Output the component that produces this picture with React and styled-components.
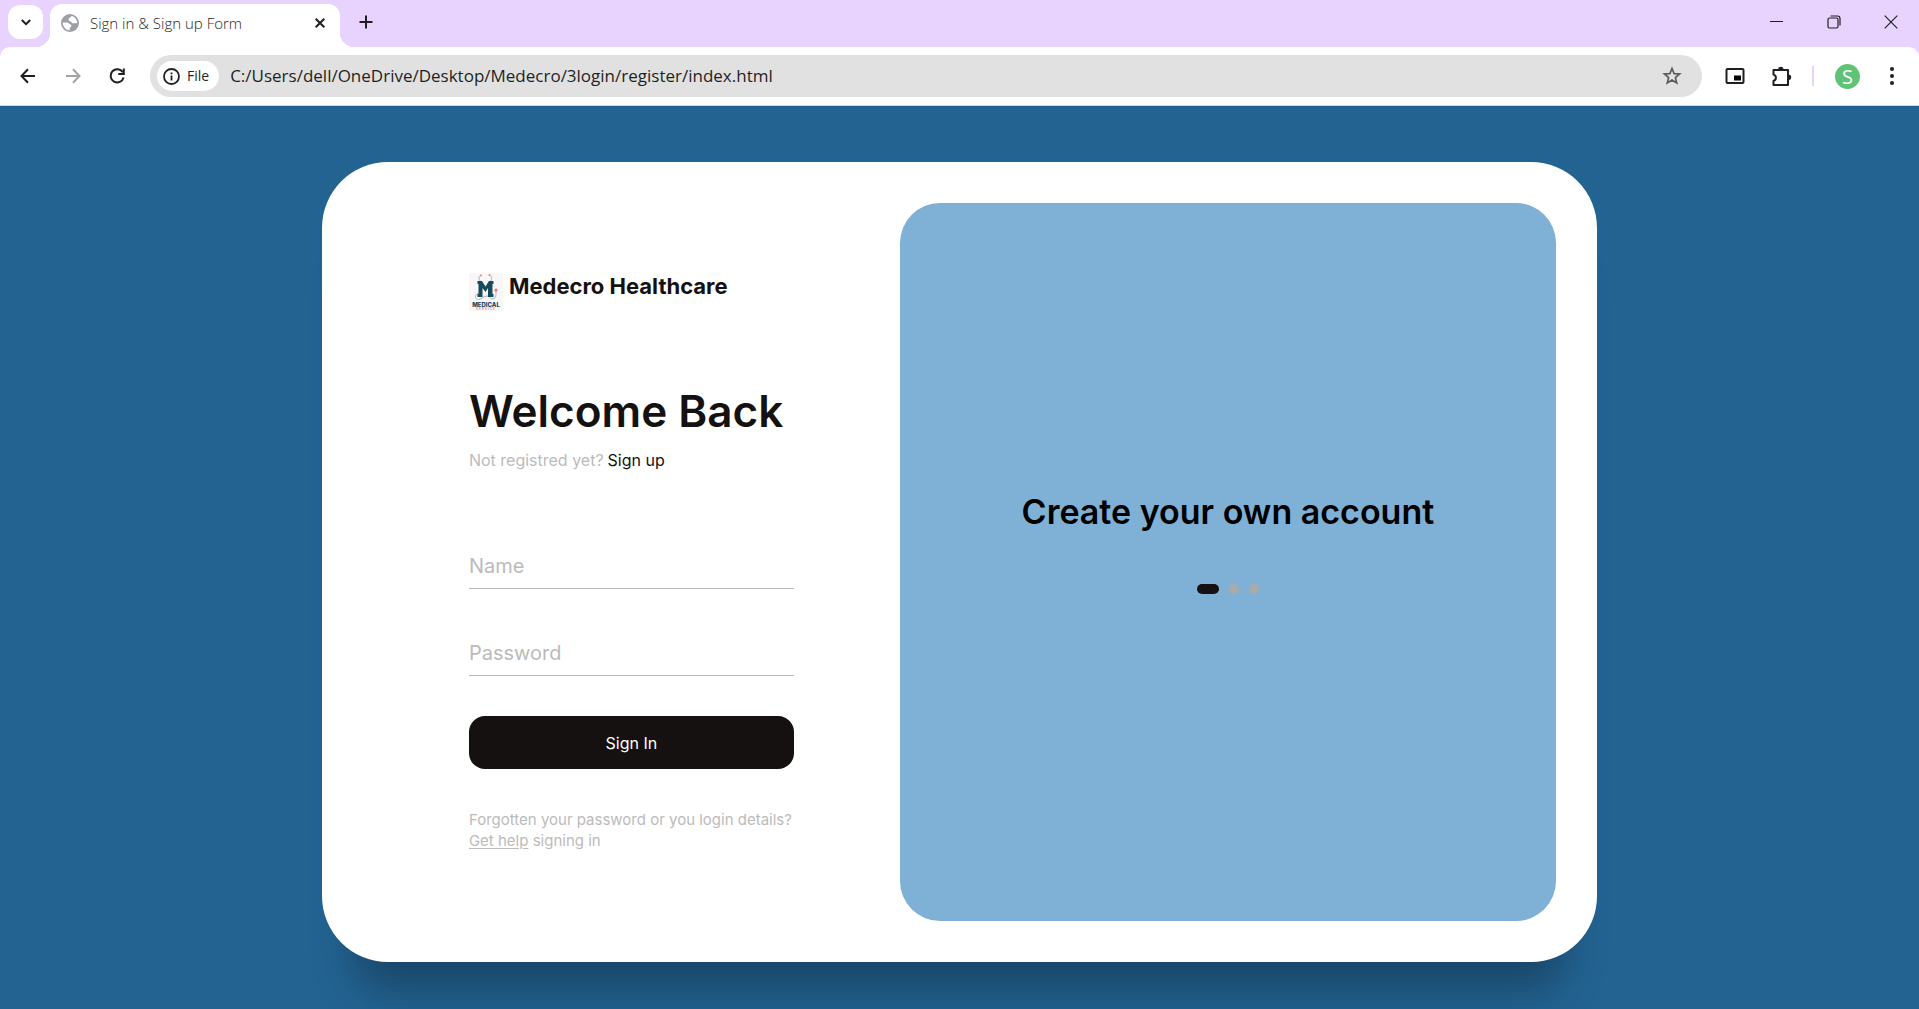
import React from "react";
import styled, { createGlobalStyle } from "styled-components";

const GlobalStyle = createGlobalStyle`
  *, *::before, *::after { box-sizing: border-box; }
  body { margin: 0; }
  body, button, input { font-family: Inter, "Liberation Sans", sans-serif; }
  button { border: 0; padding: 0; background: none; color: inherit; cursor: pointer; }
  h1, h2, p { margin: 0; }
  svg { display: block; flex: none; }
`;

const Window = styled.div`
  min-height: 100vh;
  display: flex;
  flex-direction: column;
  background: #e8d3ff;
`;

/* ---------- browser frame ---------- */

const TabStrip = styled.header`
  display: flex;
  height: 47px;
  padding-left: 8px;
  color: #1f1f23;
  font-family: "Open Sans", "Noto Sans", sans-serif;
`;

const TabSearch = styled.button`
  display: grid;
  place-items: center;
  width: 35px;
  height: 34px;
  margin: 5px 7px 0 0;
  border-radius: 12px;
  background: #fff;
`;

const Tab = styled.div`
  position: relative;
  display: flex;
  align-items: center;
  width: 290px;
  margin-top: 4px;
  padding: 0 12px 6px 11px;
  border-radius: 12px 12px 0 0;
  background: #fff;

  &::before,
  &::after {
    content: "";
    position: absolute;
    bottom: 0;
    width: 14px;
    height: 14px;
  }
  &::before {
    right: 100%;
    background: radial-gradient(circle at 0 0, transparent 14px, #fff 14px);
  }
  &::after {
    left: 100%;
    background: radial-gradient(circle at 100% 0, transparent 14px, #fff 14px);
  }
`;

const TabTitle = styled.span`
  flex: 1;
  padding-left: 11px;
  font-size: 15px;
  line-height: 20px;
  font-weight: 300;
  white-space: nowrap;
`;

const StripButton = styled.button`
  display: grid;
  place-items: center;
  width: 16px;
  height: 16px;
`;

const NewTab = styled(StripButton)`
  margin: 14px 0 0 18px;
`;

const WindowControls = styled.div`
  display: flex;
  margin-left: auto;
`;

const WindowButton = styled.button`
  display: grid;
  place-items: center;
  width: 57px;
  height: 43px;
`;

const Toolbar = styled.nav`
  display: flex;
  align-items: center;
  height: 59px;
  padding: 0 17px 0 18px;
  border-bottom: 1px solid #d5d5d8;
  border-radius: 10px 10px 0 0;
  background: #fff;
  color: #1f1f23;
`;

const NavButtons = styled.div`
  display: flex;
  gap: 25px;
  margin-right: 22px;
`;

const IconButton = styled.button`
  display: grid;
  place-items: center;
  width: 20px;
  height: 20px;
  color: ${(p) => (p.$muted ? "#a3a3a6" : "inherit")};
`;

const AddressBar = styled.div`
  flex: 1;
  display: flex;
  align-items: center;
  height: 42px;
  padding: 0 20px 0 7px;
  border-radius: 21px;
  background: #e1e1e1;
  font-family: "Open Sans", "Noto Sans", sans-serif;
`;

const FileChip = styled.button`
  display: flex;
  align-items: center;
  gap: 7px;
  height: 30px;
  padding: 0 10px 0 6px;
  border-radius: 15px;
  background: #fff;
  font-family: "Open Sans", "Noto Sans", sans-serif;
  font-size: 14px;
  line-height: 20px;
  font-weight: 500;
`;

const Address = styled.input`
  flex: 1;
  min-width: 0;
  padding: 0 0 0 11px;
  border: 0;
  outline: 0;
  background: transparent;
  color: #1f1f23;
  font-family: "Open Sans", "Noto Sans", sans-serif;
  font-size: 17px;
  line-height: 24px;
  font-weight: 375;
`;

const ToolbarActions = styled.div`
  display: flex;
  align-items: center;
  margin-left: 23px;
  gap: 25px;
`;

const Separator = styled.span`
  width: 2px;
  height: 20px;
  margin: 0 -4px 0 -3px;
  background: #e8d3ff;
`;

const Avatar = styled.button`
  width: 25px;
  height: 25px;
  margin-right: -3px;
  border-radius: 50%;
  background: #61c276;
  color: #fff;
  font-family: "Open Sans", "Noto Sans", sans-serif;
  font-size: 20px;
  line-height: 25px;
`;

/* ---------- sign in page ---------- */

const Page = styled.main`
  flex: 1;
  padding: 56px 32px 47px;
  background: #236392;
  overflow: hidden;
`;

const Card = styled.div`
  display: grid;
  grid-template-columns: 45fr 55fr;
  max-width: 1275px;
  min-height: 800px;
  margin: 0 auto;
  padding: 41px;
  border-radius: 66px;
  background: #fff;
  box-shadow: 0 60px 40px -30px rgba(0, 0, 0, 0.27);
`;

const Form = styled.form`
  display: flex;
  flex-direction: column;
  justify-content: space-evenly;
  width: 100%;
  max-width: 325px;
  margin: 0 auto;
  color: #151111;
`;

const Brand = styled.div`
  display: flex;
  align-items: flex-start;
  gap: 6px;
  height: 40px;
  font-size: 22px;
  line-height: 26px;
  font-weight: 700;
  white-space: nowrap;
`;

const Title = styled.h1`
  font-size: 44px;
  line-height: 56px;
  font-weight: 600;
  white-space: nowrap;
`;

const Prompt = styled.p`
  display: flex;
  gap: 4px;
  margin-top: 9px;
  color: #bbb;
  font-size: 16px;
  line-height: 24px;
`;

const PromptLink = styled.a`
  color: #151111;
  text-decoration: none;
`;

const Fields = styled.div`
  display: grid;
  gap: 40px;
`;

const Field = styled.div`
  display: grid;
  height: 47px;
  border-bottom: 1px solid #bbb;

  & > * { grid-area: 1 / 1; }
`;

const FieldLabel = styled.label`
  align-self: end;
  margin-bottom: 8px;
  color: #bbb;
  font-size: 20px;
  line-height: 28px;
  pointer-events: none;
`;

const FieldInput = styled.input`
  width: 100%;
  padding: 0;
  border: 0;
  outline: 0;
  background: none;
  color: #151111;
  font-size: 20px;
  line-height: 28px;
`;

const SignInButton = styled.button`
  height: 53px;
  border-radius: 16px;
  background: #151111;
  color: #fff;
  font-size: 16px;
  line-height: 24px;
`;

const Help = styled.p`
  color: #bbb;
  font-size: 15px;
  line-height: 21px;
`;

const HelpLink = styled.a`
  color: inherit;
  text-underline-offset: 2px;
`;

const Panel = styled.section`
  display: flex;
  flex-direction: column;
  align-items: center;
  justify-content: center;
  gap: 49px;
  padding-bottom: 41px;
  border-radius: 40px;
  background: #7fb0d5;
`;

const PanelTitle = styled.h2`
  color: #000;
  font-size: 34px;
  line-height: 46px;
  font-weight: 600;
  white-space: nowrap;
`;

const Bullets = styled.div`
  display: flex;
  gap: 10px;
`;

const Bullet = styled.button`
  width: ${(p) => (p.$active ? 22 : 10)}px;
  height: 10px;
  border-radius: 5px;
  background: ${(p) => (p.$active ? "#151111" : "#aaa")};
`;

/* ---------- drawings ---------- */

const Icon = ({ w = 20, h = w, sw = 2, children, ...rest }) => (
  <svg width={w} height={h} viewBox={`0 0 ${w} ${h}`} fill="none" stroke="currentColor" strokeWidth={sw} aria-hidden="true" {...rest}>
    {children}
  </svg>
);

const Globe = () => (
  <Icon w={18} stroke="none">
    <circle cx="9" cy="9" r="9" fill="#9aa0a6" />
    <g fill="#fff">
      <path d="M1.800 8.500H6C7.500 8.500 8 10 9.500 10.500C11 11 10.500 12.500 9.500 13.200C8.500 14 9 15 8.500 16.200C4.500 15.900 1.800 12.500 1.800 8.500Z" />
      <path d="M7.500 5.500C7.500 4 10 3.500 10.500 2C13.500 2.700 16 5.200 16.200 8.500C16.200 9.500 15 9.500 14 9L12.500 9.500C11 9.500 11 8 9.500 7.500C8.500 7.200 7.500 6.500 7.500 5.500Z" />
    </g>
  </Icon>
);

const MedicalLogo = () => (
  <svg width="34" height="38" viewBox="0 0 34 38" role="img" aria-label="Medical Service">
    <rect width="34" height="38" fill="#f9f6f7" />
    <g fill="none" stroke="#9fb4ba" strokeWidth="1">
      <path d="M12 2.500C9.500 3 9.500 6 11.500 8.500M20.500 2C23 3 23 6 21.500 8.500" />
      <path d="M11 20C5.500 20 5 26.500 9.500 26.500C13 26.500 14 23 18 23C22 23 21 26.500 24 26C27.500 25 27 21 27 18" />
    </g>
    <path d="M8.500 24V21H9.500V11H8.500V8H13L16.500 13.500L20 8H24.500V11H23.500V21H24.500V24H19V15L16.500 19L13.500 15V24Z" fill="#174a5b" />
    <g fill="#ee7580">
      <circle cx="12" cy="2.500" r="0.900" />
      <circle cx="20.500" cy="2" r="0.900" />
      <circle cx="27" cy="17" r="1.600" />
    </g>
    <text x="17" y="33.500" textAnchor="middle" fontFamily="Inter, sans-serif" fontSize="6" fontWeight="800" fill="#174a5b">MEDICAL</text>
    <text x="17" y="37" textAnchor="middle" fontFamily="Inter, sans-serif" fontSize="3" letterSpacing="1" fill="#ee8a92">SERVICE</text>
  </svg>
);

function BrowserFrame() {
  return (
    <>
      <TabStrip>
        <TabSearch aria-label="Search tabs">
          <Icon w={10} h={7}><path d="M0.800 1L5 5.200L9.200 1" /></Icon>
        </TabSearch>
        <Tab>
          <Globe />
          <TabTitle>Sign in &amp; Sign up Form</TabTitle>
          <StripButton aria-label="Close tab">
            <Icon w={10}><path d="M0.700 0.700L9.300 9.300M9.300 0.700L0.700 9.300" /></Icon>
          </StripButton>
        </Tab>
        <NewTab aria-label="New tab">
          <Icon w={14}><path d="M7 0.500V13.500M0.500 7H13.500" /></Icon>
        </NewTab>
        <WindowControls>
          <WindowButton aria-label="Minimize">
            <Icon w={13} sw={1}><path d="M0 6.500H13" /></Icon>
          </WindowButton>
          <WindowButton aria-label="Restore">
            <Icon w={14} sw={1.2}>
              <rect x="1" y="3" width="10" height="10" rx="1.500" />
              <path d="M3.500 1H10.500C12 1 13 2 13 3.500V10.500" />
            </Icon>
          </WindowButton>
          <WindowButton aria-label="Close">
            <Icon w={14} sw={1.2}><path d="M0.700 0.700L13.300 13.300M13.300 0.700L0.700 13.300" /></Icon>
          </WindowButton>
        </WindowControls>
      </TabStrip>
      <Toolbar>
        <NavButtons>
          <IconButton aria-label="Back">
            <Icon><path d="M17 10H4M10 3.300L3.500 10L10 16.700" /></Icon>
          </IconButton>
          <IconButton aria-label="Forward" $muted>
            <Icon><path d="M3 10H16M10 3.300L16.500 10L10 16.700" /></Icon>
          </IconButton>
          <IconButton aria-label="Reload">
            <Icon><path d="M14.800 6.300A6.600 6.600 0 1 0 15.600 11.500M15.800 2.500V8H10.300" /></Icon>
          </IconButton>
        </NavButtons>
        <AddressBar>
          <FileChip>
            <Icon w={17} sw={1.800}>
              <circle cx="8.500" cy="8.500" r="7.500" />
              <path d="M8.500 7.500V12.500M8.500 4.500V6.300" />
            </Icon>
            File
          </FileChip>
          <Address aria-label="Address" defaultValue="C:/Users/dell/OneDrive/Desktop/Medecro/3login/register/index.html" />
          <IconButton aria-label="Bookmark">
            <Icon sw={1.700} color="#5b5b5f">
              <path d="M10 2.500L12.100 7.600L17.600 8L13.400 11.600L14.700 17L10 14.100L5.300 17L6.600 11.600L2.400 8L7.900 7.600Z" />
            </Icon>
          </IconButton>
        </AddressBar>
        <ToolbarActions>
          <IconButton aria-label="Picture in picture">
            <Icon>
              <rect x="1.500" y="3" width="17" height="14" rx="1" />
              <rect x="9" y="9.500" width="7" height="5" fill="#000" stroke="none" />
            </Icon>
          </IconButton>
          <IconButton aria-label="Extensions">
            <Icon w={22}>
              <path d="M3.500 4H18V19H3.500V14.800A3.200 3.200 0 0 0 3.500 8.600Z" strokeLinejoin="round" />
              <path d="M8.700 3.500A2.200 2.200 0 0 1 13 3.500ZM18.500 9.300A2.200 2.200 0 0 1 18.500 13.600Z" fill="currentColor" stroke="none" />
              <path d="M9 3A2 2 0 0 1 12.700 3M19 9.500A2 2 0 0 1 19 13.200" />
            </Icon>
          </IconButton>
          <Separator />
          <Avatar aria-label="Profile">S</Avatar>
          <IconButton aria-label="Menu">
            <Icon stroke="none" fill="currentColor">
              <circle cx="10" cy="3" r="2" />
              <circle cx="10" cy="10" r="2" />
              <circle cx="10" cy="17" r="2" />
            </Icon>
          </IconButton>
        </ToolbarActions>
      </Toolbar>
    </>
  );
}

export default function App() {
  return (
    <Window>
      <GlobalStyle />
      <BrowserFrame />
      <Page>
        <Card>
          <Form onSubmit={(e) => e.preventDefault()}>
            <Brand>
              <MedicalLogo />
              Medecro Healthcare
            </Brand>
            <div>
              <Title>Welcome Back</Title>
              <Prompt>
                Not registred yet?
                <PromptLink href="#signup">Sign up</PromptLink>
              </Prompt>
            </div>
            <Fields>
              <Field>
                <FieldInput id="name" type="text" autoComplete="off" />
                <FieldLabel htmlFor="name">Name</FieldLabel>
              </Field>
              <Field>
                <FieldInput id="password" type="password" autoComplete="off" />
                <FieldLabel htmlFor="password">Password</FieldLabel>
              </Field>
              <SignInButton type="submit">Sign In</SignInButton>
              <Help>
                Forgotten your password or you login details? <HelpLink href="#help">Get help</HelpLink> signing in
              </Help>
            </Fields>
          </Form>
          <Panel>
            <PanelTitle>Create your own account</PanelTitle>
            <Bullets>
              <Bullet $active aria-label="Slide 1" />
              <Bullet aria-label="Slide 2" />
              <Bullet aria-label="Slide 3" />
            </Bullets>
          </Panel>
        </Card>
      </Page>
    </Window>
  );
}
